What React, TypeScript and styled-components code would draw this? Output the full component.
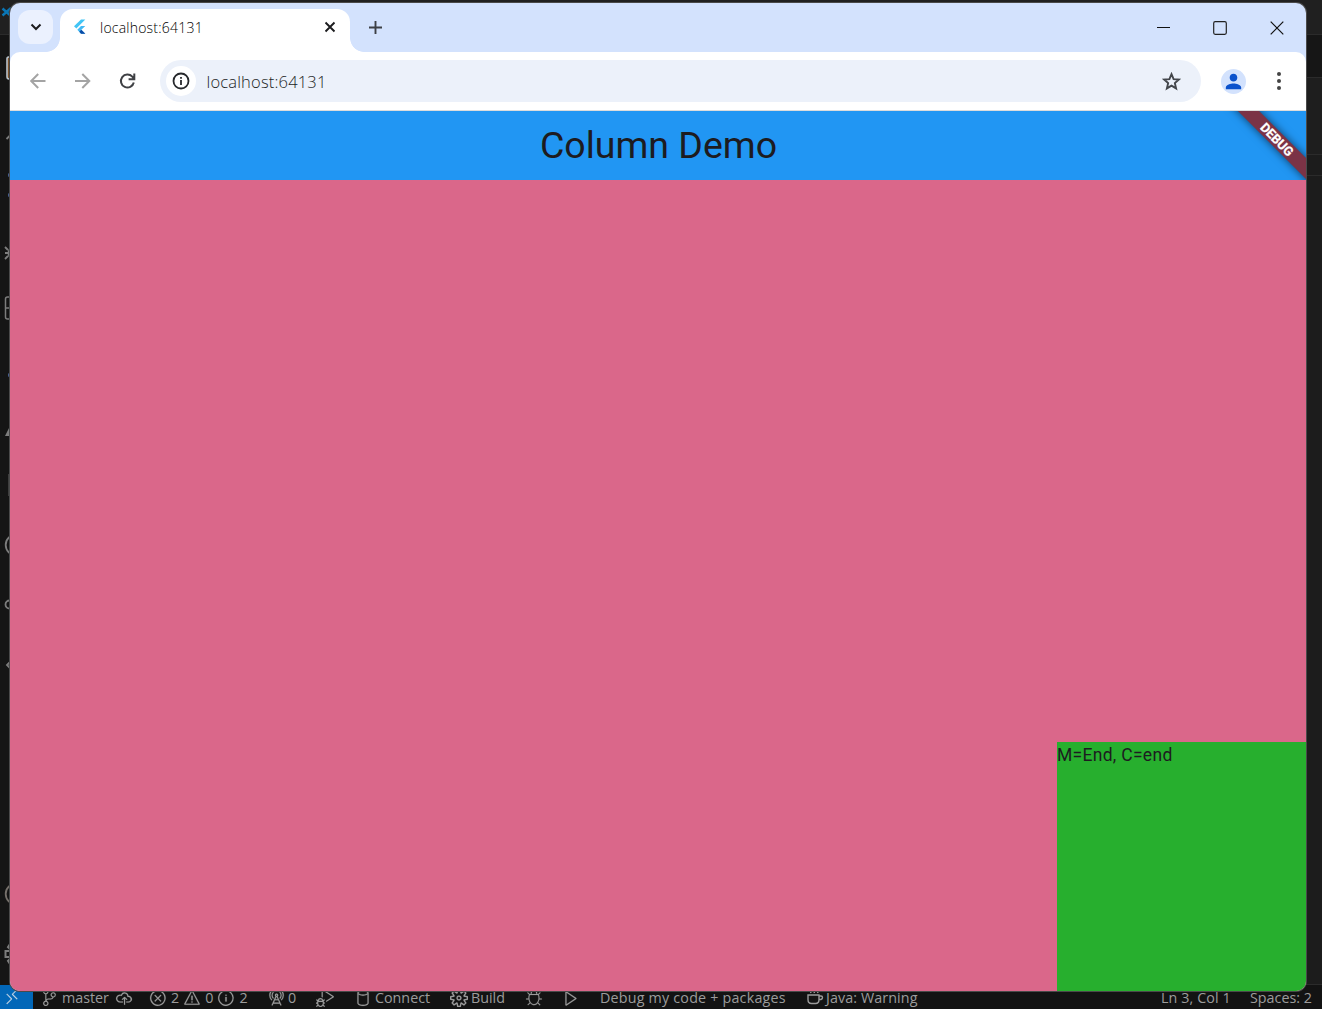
import React from "react";
import styled, { createGlobalStyle } from "styled-components";
import {
  VscRemote, VscSourceControl, VscCloudUpload, VscError, VscWarning, VscInfo,
  VscRadioTower, VscDebugAlt, VscDatabase, VscSettingsGear, VscBug, VscPlay,
} from "react-icons/vsc";
import { MdPerson } from "react-icons/md";

const UI = `"Open Sans", "Noto Sans", sans-serif`;

const Global = createGlobalStyle`
  * { box-sizing: border-box; }
  html, body { margin: 0; background: #171717; overflow: hidden; }
  svg { display: block; flex: none; }
`;

const Desktop = styled.div`
  position: relative;
  width: 1322px;
  height: 1009px;
  overflow: hidden;
  display: flex;
  flex-direction: column;
  background: #151515;
  font-family: ${UI};
`;

const TitleBar = styled.div`
  height: 35px;
  flex: none;
  background: #202020;
  border-bottom: 1px solid #2b2b2b;
  padding: 6px 0 0 1px;
`;

const Workbench = styled.div`
  flex: 1;
  min-height: 0;
  display: flex;
  justify-content: space-between;
`;

const ActivityBar = styled.div`
  width: 60px;
  display: flex;
  flex-direction: column;
  color: #7d7d7d;
`;

const ActivityItem = styled.div<{ $h: number }>`
  height: ${(p) => p.$h}px;
  flex: none;
  display: flex;
  align-items: center;
  svg { overflow: visible; }
`;

const EditorEdge = styled.div`
  width: 30px;
  display: flex;
  flex-direction: column;
`;

const EditorBand = styled.div<{ $h?: number; $bg: string }>`
  ${(p) => (p.$h ? `height: ${p.$h}px;` : "flex: 1;")}
  background: ${(p) => p.$bg};
  border-bottom: 1px solid #2b2b2b;
`;

const StatusBar = styled.div`
  height: 24px;
  flex: none;
  display: flex;
  align-items: center;
  background: #131313;
  color: #9c9c9c;
  font-size: 14.3px;
  line-height: 24px;
  white-space: nowrap;
  svg { stroke-width: 0.15px; }
`;

const RemoteBox = styled.div`
  width: 33px;
  height: 24px;
  padding-left: 3px;
  display: flex;
  align-items: center;
  background: #0267b8;
  color: #c3d5e5;
`;

const StatusItem = styled.div<{ $ml: number; $w: number; $gap?: number; $ls?: number }>`
  margin-left: ${(p) => p.$ml}px;
  width: ${(p) => p.$w}px;
  height: 24px;
  display: flex;
  align-items: center;
  gap: ${(p) => p.$gap ?? 4}px;
  letter-spacing: ${(p) => p.$ls ?? 0}px;
  padding-top: 1px;
`;

const BranchLabel = styled.div`
  display: flex;
  align-items: center;
  gap: 4px;
`;

const Spring = styled.div`
  flex: 1;
`;

const BrowserWindow = styled.div`
  position: absolute;
  left: 10px;
  top: 3px;
  width: 1296px;
  height: 988px;
  border-radius: 10px;
  overflow: hidden;
  display: flex;
  flex-direction: column;
  background: #d3e2fd;
`;

const WindowOutline = styled.div`
  position: absolute;
  left: 9px;
  top: 2px;
  width: 1298px;
  height: 990px;
  border-radius: 11px;
  background: #4a4a4a;
`;

const TabStrip = styled.div`
  height: 49px;
  flex: none;
  display: flex;
  align-items: flex-start;
`;

const TabSearch = styled.div`
  margin: 7px 7px 0 8px;
  width: 35px;
  height: 34px;
  border-radius: 12px;
  background: #ebf1fe;
  display: flex;
  align-items: center;
  justify-content: center;
`;

const Tab = styled.div`
  position: relative;
  margin-top: 6px;
  width: 290px;
  height: 43px;
  border-radius: 13px 13px 0 0;
  background: #fff;
  display: flex;
  align-items: center;
  padding: 0 14px 7px 13px;
  &::before, &::after {
    content: "";
    position: absolute;
    bottom: 0;
    width: 14px;
    height: 14px;
  }
  &::before {
    left: -14px;
    background: radial-gradient(circle at 0 0, transparent 13.5px, #fff 14.2px);
  }
  &::after {
    right: -14px;
    background: radial-gradient(circle at 100% 0, transparent 13.5px, #fff 14.2px);
  }
`;

const TabTitle = styled.span`
  flex: 1;
  margin-left: 12px;
  padding-top: 2px;
  font-size: 14px;
  font-weight: 360;
  letter-spacing: 0.22px;
  color: #000;
  line-height: 20px;
`;

const NewTab = styled.div`
  margin: 17px 0 0 18px;
`;

const WindowControls = styled.div`
  margin-left: auto;
  height: 49px;
  display: flex;
  align-items: center;
  gap: 43px;
  padding-right: 22px;
`;

const Toolbar = styled.div`
  height: 58px;
  flex: none;
  background: #fff;
  border-radius: 10px 10px 0 0;
  display: flex;
  align-items: center;
  padding: 0 18px;
`;

const NavIcons = styled.div`
  width: 132px;
  display: flex;
  gap: 26px;
`;

const Omnibox = styled.div`
  width: 1041px;
  height: 42px;
  border-radius: 21px;
  background: #ecf1fa;
  display: flex;
  align-items: center;
  padding: 0 18px 0 6px;
`;

const SiteInfo = styled.div`
  width: 30px;
  height: 30px;
  border-radius: 50%;
  background: #fff;
  display: flex;
  align-items: center;
  justify-content: center;
`;

const Url = styled.span`
  flex: 1;
  margin-left: 10.5px;
  padding-top: 1px;
  font-size: 16.5px;
  letter-spacing: 0.18px;
  color: #1c1f25;
  font-weight: 360;
  line-height: 24px;
`;

const Avatar = styled.div`
  width: 25px;
  height: 25px;
  margin: 0 30px 0 20px;
  border-radius: 50%;
  background: #d3e2fd;
  color: #0b52cc;
  display: flex;
  align-items: center;
  justify-content: center;
`;

const Page = styled.div`
  flex: 1;
  min-height: 0;
  border-top: 1px solid #dcdcdc;
  display: flex;
  flex-direction: column;
  font-family: Roboto, sans-serif;
`;

const AppBar = styled.div`
  position: relative;
  height: 69px;
  flex: none;
  overflow: hidden;
  background: #2196f3;
  display: flex;
  align-items: center;
  justify-content: center;
  padding: 0 0 2px 1px;
`;

const AppTitle = styled.span`
  font-size: 37.5px;
  line-height: 44px;
  color: #1d1b20;
`;

const DebugBanner = styled.div`
  position: absolute;
  left: 1207px;
  top: 21px;
  width: 120px;
  height: 15px;
  transform: rotate(45deg);
  background: #7b3346;
  box-shadow: 0 0 8px rgba(0, 0, 0, 0.6);
  color: #fff;
  font-size: 12.8px;
  font-weight: 700;
  line-height: 15px;
  text-align: center;
  -webkit-text-stroke: 0.25px #fff;
`;

const Body = styled.div`
  flex: 1;
  display: flex;
  flex-direction: column;
  justify-content: flex-end;
  align-items: flex-end;
  background: #da678a;
`;

const GreenBox = styled.div`
  width: 249px;
  height: 249px;
  background: #27af2e;
  color: #1d1b20;
  font-size: 17.5px;
  line-height: 27px;
  letter-spacing: 0.3px;
`;

const strokeProps = { fill: "none", stroke: "currentColor", strokeWidth: 1.8 } as const;

const NavArrow = ({ flip }: { flip?: boolean }) => (
  <svg width="19" height="20" viewBox="0 0 19 20" fill="none" stroke="#a4a4a4" strokeWidth="2">
    <path d={flip ? "M2 10H16M9.3 3L16.3 10L9.3 17" : "M17.500 10H3.500M10.200 3L3.200 10L10.200 17"} />
  </svg>
);

const activity: { h: number; art: React.ReactNode }[] = [
  { h: 65, art: <svg width="10" height="24"><path d="M11 1H8.500Q7 1 7 3V20.500Q7 23 9 23H11" fill="#7a5029" stroke="#b9c3cc" strokeWidth="1.600" /></svg> },
  { h: 116, art: <svg width="10" height="80"><path d="M6.500 21L10 17.500" {...strokeProps} /><circle cx="10.500" cy="57" r="2.500" fill="#4c669a" /><circle cx="10.500" cy="77" r="2.500" fill="#4c669a" /></svg> },
  { h: 74, art: <svg width="10" height="16"><path d="M5 2L8 5M5 8H8M5 14L8 11M10 4Q7 8 10 12" {...strokeProps} /></svg> },
  { h: 36, art: <svg width="10" height="24"><path d="M11 1H7.500Q5.500 1 5.500 3V21Q5.500 23 7.500 23H11M5.500 12H11" {...strokeProps} strokeWidth="1.500" /></svg> },
  { h: 98, art: <svg width="10" height="6"><circle cx="10.500" cy="3" r="2.500" fill="#4c669a" /></svg> },
  { h: 14, art: <svg width="10" height="12"><path d="M10 1L5 11H10Z" fill="currentColor" /></svg> },
  { h: 94, art: <svg width="10" height="22"><path d="M9.500 0V22" {...strokeProps} /></svg> },
  { h: 26, art: <svg width="10" height="22"><circle cx="16" cy="11" r="10.300" {...strokeProps} /></svg> },
  { h: 94, art: <svg width="10" height="10"><circle cx="9.500" cy="4.500" r="4" {...strokeProps} /></svg> },
  { h: 26, art: <svg width="10" height="8"><path d="M10 1L7 4L10 7" {...strokeProps} /></svg> },
  { h: 202, art: null },
  { h: 26, art: <svg width="10" height="22"><circle cx="16" cy="12" r="10.300" {...strokeProps} stroke="#76706b" /></svg> },
  { h: 20, art: null },
  { h: 56, art: <svg width="10" height="22"><path d="M10 1L8 4L10 6M10 8H5.500V14H10M10 16L8 18L10 21" {...strokeProps} strokeWidth="2" /></svg> },
];

export default function App() {
  return (
    <Desktop>
      <Global />
      <TitleBar>
        <svg width="12" height="12" viewBox="0 0 12 12" fill="none" stroke="#0a76b5" strokeWidth="2.400">
          <path d="M1.500 2.500L10 10M1.500 9.500L10 2" />
        </svg>
      </TitleBar>
      <Workbench>
        <ActivityBar>
          {activity.map((a, i) => (
            <ActivityItem key={i} $h={a.h}>{a.art}</ActivityItem>
          ))}
        </ActivityBar>
        <EditorEdge>
          <EditorBand $h={43} $bg="#161616" />
          <EditorBand $h={77} $bg="#1e1e1e" />
          <EditorBand $h={21} $bg="#1c1c1c" />
          <EditorBand $bg="#1c1c1c" />
        </EditorEdge>
      </Workbench>
      <StatusBar>
        <RemoteBox><VscRemote size={18} /></RemoteBox>
        <StatusItem $ml={8} $w={91} $gap={6}>
          <BranchLabel><VscSourceControl size={17} />master</BranchLabel>
          <VscCloudUpload size={18} />
        </StatusItem>
        <StatusItem $ml={17} $w={100} $gap={4}>
          <VscError size={18} />2<VscWarning size={18} />0<VscInfo size={18} />2
        </StatusItem>
        <StatusItem $ml={18} $w={30} $gap={3}><VscRadioTower size={18} />0</StatusItem>
        <StatusItem $ml={19} $w={20}><VscDebugAlt size={18} /></StatusItem>
        <StatusItem $ml={18} $w={77} $gap={3}><VscDatabase size={18} />Connect</StatusItem>
        <StatusItem $ml={19} $w={57} $gap={3}><VscSettingsGear size={18} />Build</StatusItem>
        <StatusItem $ml={18} $w={18}><VscBug size={18} /></StatusItem>
        <StatusItem $ml={19} $w={18}><VscPlay size={18} /></StatusItem>
        <StatusItem $ml={20} $w={187} $ls={0.2}>Debug my code + packages</StatusItem>
        <StatusItem $ml={19} $w={115} $gap={2} $ls={0.1}>
          <svg width="18" height="17" viewBox="0 0 18 17" fill="none" stroke="currentColor">
            <path strokeWidth="1.400" d="M2 6H13V10.500Q13 14.500 9.500 14.500H5.500Q2 14.500 2 10.500ZM13 7H15Q16.500 7 16.500 8.500T15 10.500H13M4 1L5 4M7.500 1L8.500 4M11 1L12 4" />
          </svg>
          Java: Warning
        </StatusItem>
        <Spring />
        <StatusItem $ml={0} $w={69} $ls={0.1}>Ln 3, Col 1</StatusItem>
        <StatusItem $ml={20} $w={72}>Spaces: 2</StatusItem>
      </StatusBar>

      <WindowOutline />
      <BrowserWindow>
        <TabStrip>
          <TabSearch>
            <svg width="12" height="8" viewBox="0 0 12 8" fill="none" stroke="#1c1c1e" strokeWidth="2">
              <path d="M1.500 1.500L6 6L10.500 1.500" />
            </svg>
          </TabSearch>
          <Tab>
            <svg width="15" height="16" viewBox="0 0 15 16">
              <path d="M8 0.500H12.300L3.300 9.500L1 7.200Z" fill="#42c5f5" />
              <path d="M8 7H12.300L8.300 10.800L12.300 14.800H8L4.300 10.800Z" fill="#42b9f5" />
              <path d="M6.300 12.800L8.300 10.800L12.300 14.800H8Z" fill="#0b4aa5" />
            </svg>
            <TabTitle>localhost:64131</TabTitle>
            <svg width="12" height="12" viewBox="0 0 12 12" stroke="#1c1c1e" strokeWidth="1.900">
              <path d="M1.500 1.500L10.500 10.500M10.500 1.500L1.500 10.500" />
            </svg>
          </Tab>
          <NewTab>
            <svg width="15" height="15" viewBox="0 0 15 15" stroke="#3c3f45" strokeWidth="1.900">
              <path d="M7.500 1V14M1 7.500H14" />
            </svg>
          </NewTab>
          <WindowControls>
            <svg width="14" height="14" stroke="#111" strokeWidth="1"><path d="M1 6.500H14" /></svg>
            <svg width="14" height="14" fill="none" stroke="#222" strokeWidth="1.200"><rect x="0.700" y="0.700" width="12.600" height="12.600" rx="1.500" /></svg>
            <svg width="14" height="14" stroke="#111" strokeWidth="1.200"><path d="M0.700 0.700L13.300 13.300M13.300 0.700L0.700 13.300" /></svg>
          </WindowControls>
        </TabStrip>
        <Toolbar>
          <NavIcons>
            <NavArrow />
            <NavArrow flip />
            <svg width="19" height="20" viewBox="0 0 19 20" fill="none" stroke="#3f4145" strokeWidth="2">
              <path d="M15.800 11.500A6.500 6.500 0 1 1 14.300 5.700L16 7.800M16.300 2.500V8.200H10.600" />
            </svg>
          </NavIcons>
          <Omnibox>
            <SiteInfo>
              <svg width="18" height="18" viewBox="0 0 18 18" fill="none" stroke="#26282c" strokeWidth="1.800">
                <circle cx="9" cy="9" r="7.500" />
                <path d="M9 8V13M9 4.900V6.700" />
              </svg>
            </SiteInfo>
            <Url>localhost:64131</Url>
            <svg width="23" height="23" viewBox="0 0 24 24" fill="none" stroke="#44474c" strokeWidth="2">
              <path d="M12 4.300L14.200 9.500L19.700 10L15.500 13.700L16.800 19.200L12 16.300L7.200 19.200L8.500 13.700L4.300 10L9.800 9.500Z" />
            </svg>
          </Omnibox>
          <Avatar><MdPerson size={23} /></Avatar>
          <svg width="6" height="20" fill="#444">
            <circle cx="3" cy="3" r="2" /><circle cx="3" cy="10" r="2" /><circle cx="3" cy="17" r="2" />
          </svg>
        </Toolbar>
        <Page>
          <AppBar>
            <AppTitle>Column Demo</AppTitle>
            <DebugBanner>DEBUG</DebugBanner>
          </AppBar>
          <Body>
            <GreenBox>M=End, C=end</GreenBox>
          </Body>
        </Page>
      </BrowserWindow>
    </Desktop>
  );
}
